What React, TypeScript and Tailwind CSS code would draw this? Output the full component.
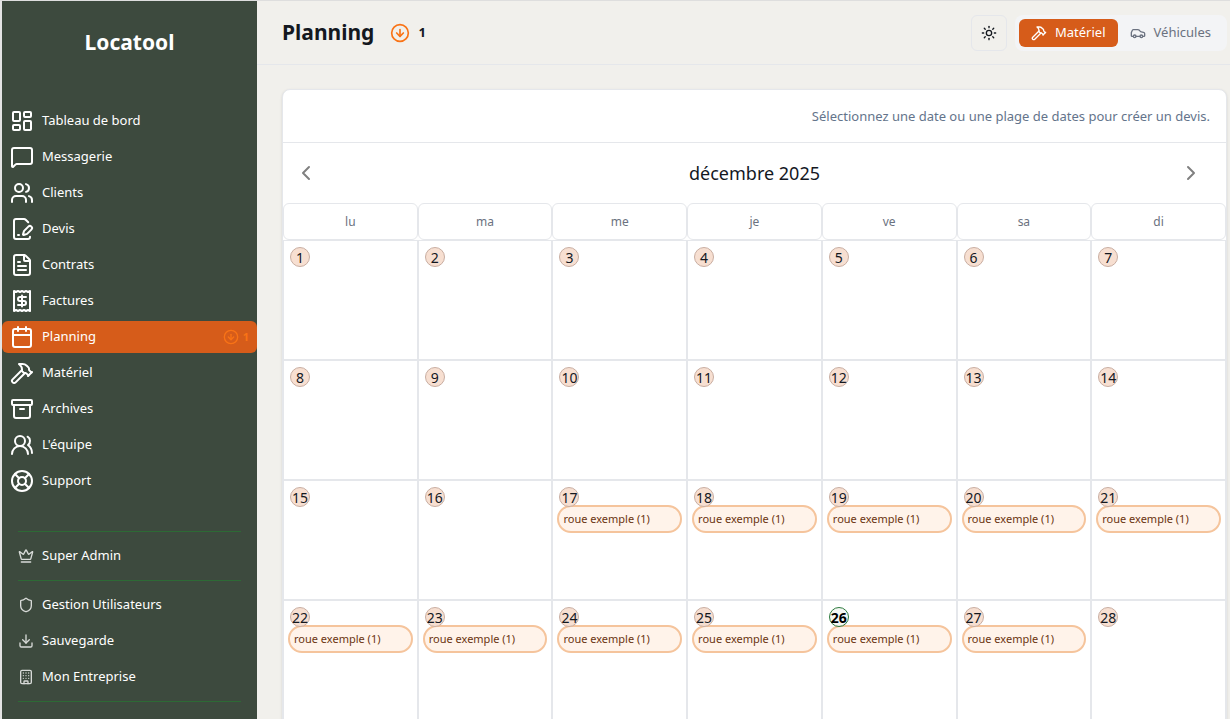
import { useState } from 'react';
import {
  Archive,
  Building,
  Calendar,
  Car,
  ChevronLeft,
  ChevronRight,
  CircleArrowDown,
  Crown,
  Download,
  FilePenLine,
  FileText,
  Hammer,
  LayoutDashboard,
  LifeBuoy,
  MessageSquare,
  Receipt,
  Shield,
  Sun,
  Users,
  UsersRound,
} from 'lucide-react';

const mainLinks = [
  { label: 'Tableau de bord', icon: LayoutDashboard },
  { label: 'Messagerie', icon: MessageSquare },
  { label: 'Clients', icon: Users },
  { label: 'Devis', icon: FilePenLine },
  { label: 'Contrats', icon: FileText },
  { label: 'Factures', icon: Receipt },
  { label: 'Planning', icon: Calendar, badge: 1 },
  { label: 'Matériel', icon: Hammer },
  { label: 'Archives', icon: Archive },
  { label: "L'équipe", icon: UsersRound },
  { label: 'Support', icon: LifeBuoy },
];

const adminLinks = [
  { label: 'Gestion Utilisateurs', icon: Shield },
  { label: 'Sauvegarde', icon: Download },
  { label: 'Mon Entreprise', icon: Building },
];

const views = [
  { id: 'materiel', label: 'Matériel', icon: Hammer },
  { id: 'vehicules', label: 'Véhicules', icon: Car },
];

const weekdays = ['lu', 'ma', 'me', 'je', 've', 'sa', 'di'];
const weeks = [0, 1, 2, 3].map(w => weekdays.map((_, d) => w * 7 + d + 1));
const today = 26;
const booking = { from: 17, to: 27, label: 'roue exemple (1)' };

function Sidebar() {
  return (
    <aside className="w-[257px] shrink-0 border-l-2 border-[#e4e4e4] bg-[#3d4a3e] text-white">
      <div className="flex h-[84px] items-center justify-center text-[21px] font-bold">Locatool</div>
      <nav>
        <ul className="mt-5 flex flex-col gap-1">
          {mainLinks.map(link => (
            <li key={link.label}>
              <a
                href="#"
                className={`flex h-8 items-center gap-2 rounded-md px-2 text-[13px] ${link.badge ? 'bg-[#d65c1a]' : ''}`}
              >
                <link.icon className="h-6 w-6" />
                {link.label}
                {link.badge && (
                  <span className="ml-auto flex items-center gap-1 text-[11px] font-bold text-[#f97316]">
                    <CircleArrowDown className="h-4 w-4" /> {link.badge}
                  </span>
                )}
              </a>
            </li>
          ))}
        </ul>
        <div className="mx-4 mt-[34px] border-y border-[#2d6a35] py-2">
          <a href="#" className="flex h-8 items-center gap-2 text-[13px]">
            <Crown className="h-4 w-4 opacity-80" /> Super Admin
          </a>
        </div>
        <ul className="mx-4 flex flex-col gap-1 border-b border-[#2d6a35] py-2">
          {adminLinks.map(link => (
            <li key={link.label}>
              <a href="#" className="flex h-8 items-center gap-2 text-[13px]">
                <link.icon className="h-4 w-4 opacity-80" /> {link.label}
              </a>
            </li>
          ))}
        </ul>
      </nav>
    </aside>
  );
}

function DayCell({ day }: { day: number }) {
  const booked = day >= booking.from && day <= booking.to;
  return (
    <td className="h-[120px] border border-[#e5e7eb] px-1 pt-1.5 pb-0 align-top">
      {/* The day number sits on top of the booking bar */}
      <button
        className={`relative z-10 ml-0.5 flex h-5 w-5 items-center justify-center rounded-full border text-[14px] ${
          day === today ? 'border-[#2d7a3e] bg-[#f2f5f1]/80 font-bold text-black' : 'border-[#c9aea2] bg-[#f7dfd1] text-[#14181f]'
        }`}
      >
        {day}
      </button>
      {booked && (
        <button className="-mt-0.5 block h-7 w-full truncate rounded-full border-2 border-[#f5c49c] bg-[#fff3ea] px-1 text-left text-[11px] text-[#6b3410]">
          {booking.label}
        </button>
      )}
    </td>
  );
}

export default function App() {
  const [view, setView] = useState('materiel');

  return (
    <div className="flex h-screen overflow-hidden border-t border-[#dedede] bg-[#f1f0ec] font-['Noto_Sans',sans-serif] text-[#14181f]">
      <Sidebar />
      <div className="min-w-0 flex-1">
        <header className="flex h-16 items-center border-b border-[#e5e7eb] pr-[3px] pl-[25px]">
          <h1 className="text-[21px] font-bold">Planning</h1>
          <span className="ml-4 flex items-center gap-2 text-[13px] font-bold">
            <CircleArrowDown className="h-5 w-5 text-[#f97316]" /> 1
          </span>
          <button aria-label="Thème" className="ml-auto flex h-9 w-9 items-center justify-center rounded-md border border-[#e5e7eb]">
            <Sun className="h-4 w-4" />
          </button>
          <div className="ml-2 flex h-9 items-center rounded-lg bg-[#f3f4f6] p-1 text-[13px]">
            {views.map(v => (
              <button
                key={v.id}
                onClick={() => setView(v.id)}
                className={`flex h-7 items-center gap-2 rounded-md px-3 ${view === v.id ? 'bg-[#d65c1a] text-white' : 'text-[#6b7280]'}`}
              >
                <v.icon className="h-4 w-4" /> {v.label}
              </button>
            ))}
          </div>
        </header>

        <main className="mt-6 mr-[3px] ml-[25px] rounded-lg border border-[#e5e7eb] bg-white pb-6 shadow-sm">
          <p className="border-b border-[#e5e7eb] px-4 py-4 text-right text-[13px] leading-5 text-[#64748b]">
            Sélectionnez une date ou une plage de dates pour créer un devis.
          </p>
          <div className="flex h-[60px] items-center justify-between px-[11px]">
            <button aria-label="Mois précédent" className="w-9 text-[#808080]">
              <ChevronLeft className="h-6 w-6" />
            </button>
            <h2 className="text-[18px]">décembre 2025</h2>
            <button aria-label="Mois suivant" className="w-9 text-[#808080]">
              <ChevronRight className="h-6 w-6" />
            </button>
          </div>
          <table className="w-full table-fixed border-separate border-spacing-0">
            <thead>
              <tr>
                {weekdays.map(name => (
                  <th
                    key={name}
                    scope="col"
                    className="h-[37px] rounded-md border border-[#e5e7eb] p-0 text-center text-[12px] font-normal text-[#6b7280]"
                  >
                    {name}
                  </th>
                ))}
              </tr>
            </thead>
            <tbody>
              {weeks.map(week => (
                <tr key={week[0]}>
                  {week.map(day => (
                    <DayCell key={day} day={day} />
                  ))}
                </tr>
              ))}
            </tbody>
          </table>
        </main>
      </div>
    </div>
  );
}
